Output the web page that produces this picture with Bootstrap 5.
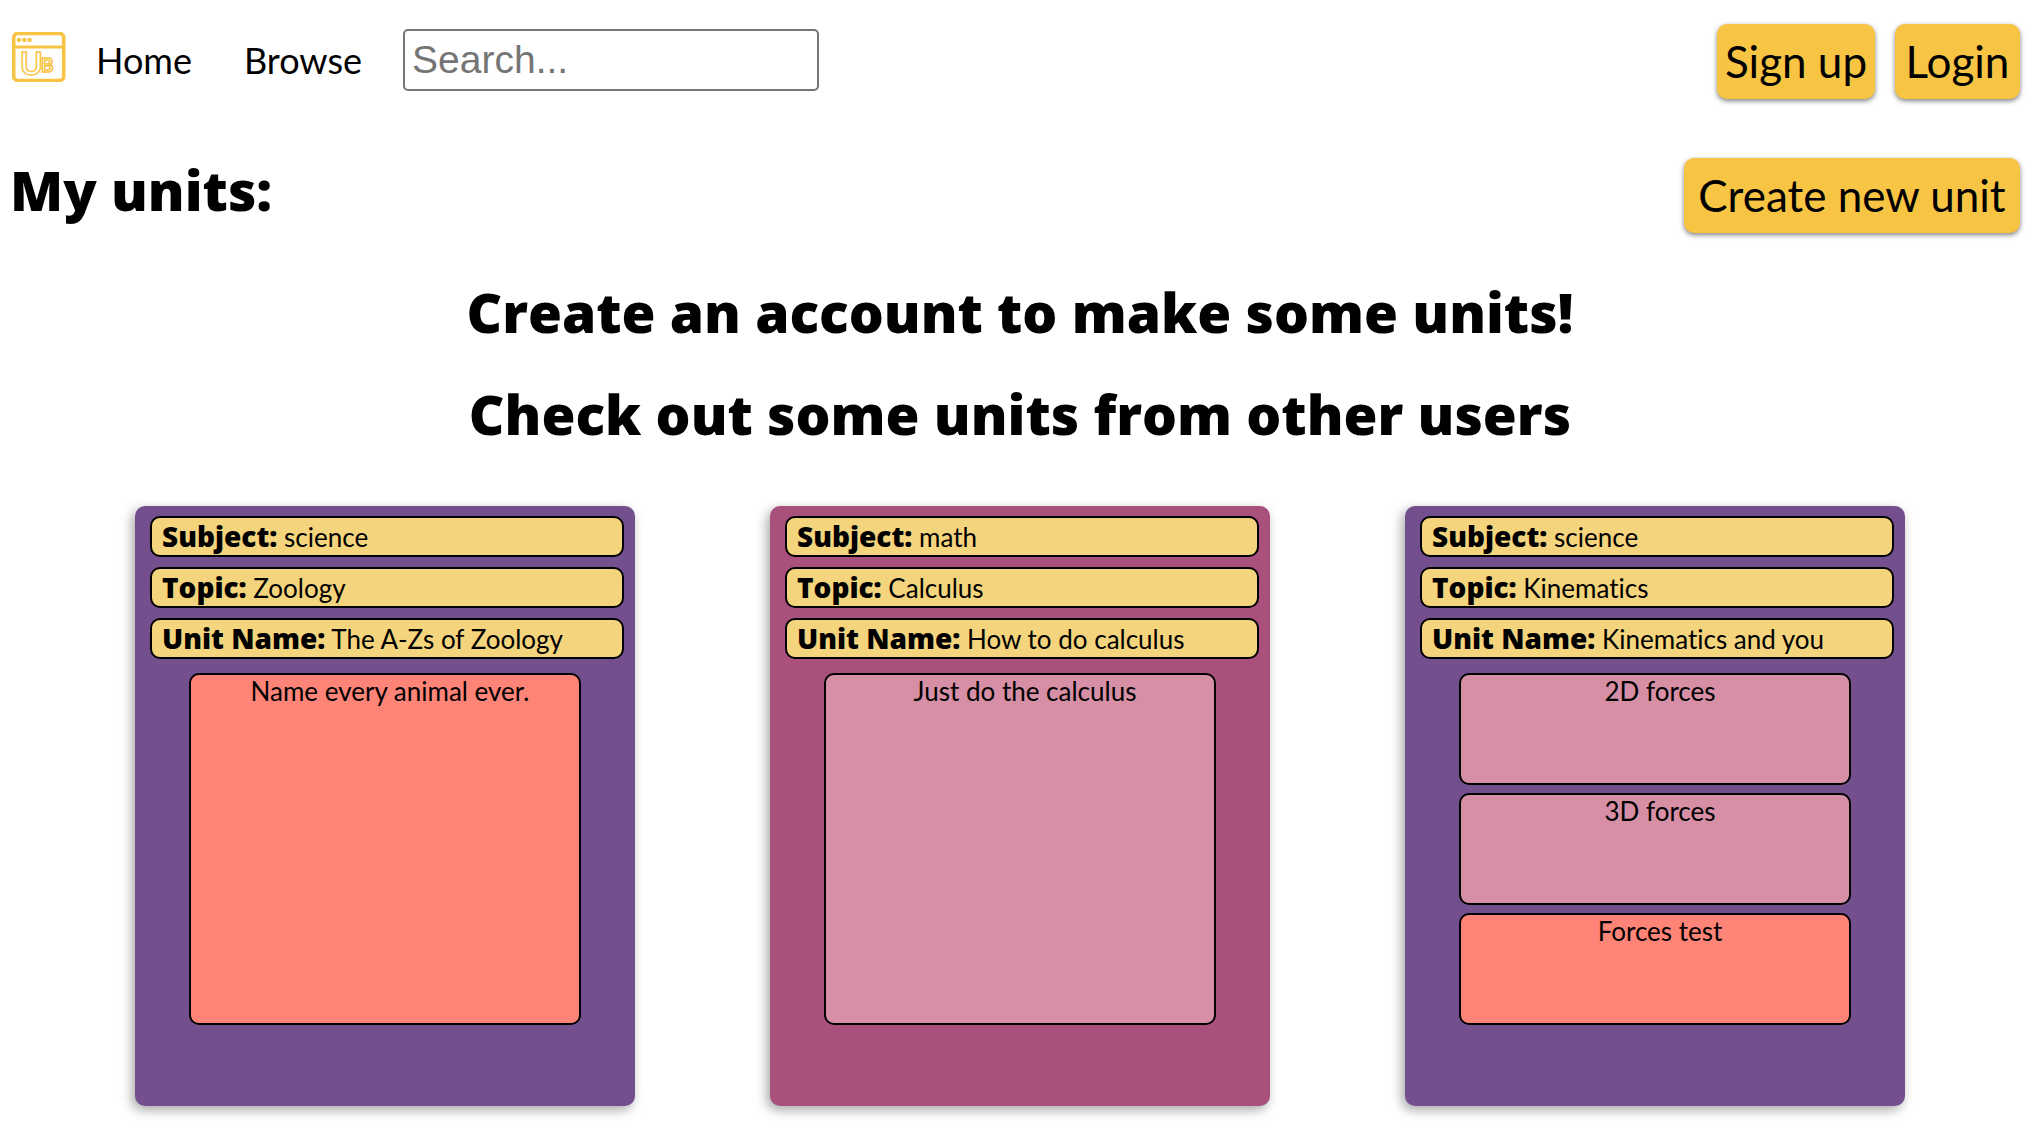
<!DOCTYPE html>
<html lang="en">
<head>
<meta charset="utf-8">
<meta name="viewport" content="width=device-width, initial-scale=1">
<title>Unit Builder</title>
<link href="https://cdn.jsdelivr.net/npm/bootstrap@5.3.0/dist/css/bootstrap.min.css" rel="stylesheet">
<style>
  body { font-family: Lato, "Open Sans", sans-serif; font-variant-ligatures: none; color: #000; background: #fff; }
  .site-bar { padding: 24px 24px 0 12px; }
  .site-links { padding-top: 5px; }
  .brand-link { padding-bottom: 6px; margin-right: 4px; line-height: 0; }
  .site-links .nav-link { padding: 0 26px; font-size: 36px; line-height: 60px; color: #000; }
  .search-box { width: 416px; height: 62px; margin-left: 15px; padding: 0 7px; border: 2px solid #767676; border-radius: 5px; font: 39px "Liberation Sans", Arial, sans-serif; color: #000; }
  .search-box::placeholder { color: #757575; }
  .btn-gold { --bs-btn-bg: #f7c443; --bs-btn-color: #000; --bs-btn-hover-bg: #eab52f; --bs-btn-active-bg: #eab52f; height: 75px; padding: 0; border: 0; border-radius: 10px; font-size: 44px; line-height: 75px; white-space: nowrap; box-shadow: 0 2px 5px rgba(0,0,0,.5); }
  .btn-signup { width: 158px; }
  .btn-login { width: 125px; }
  .btn-create { width: 336px; }
  .auth-buttons { gap: 20px; }
  .section-title { font: 800 55px/64px "Open Sans", sans-serif; margin: 0; }
  .units-bar { padding: 59px 24px 0 10px; }
  .units-body { padding: 0 4px 40px 0; }
  .notices { padding: 47px 0 60px; gap: 38px; }
  .unit-card { width: 500px; height: 600px; padding: 10px 11px 0 15px; border-radius: 10px; box-shadow: -3px 4px 12px rgba(0,0,0,.35); }
  .subject-science { background: #734f8e; }
  .subject-math { background: #a9507d; }
  .unit-field { height: 41px; margin-bottom: 10px; padding-left: 10px; border: 2px solid #000; border-radius: 10px; background: #f4d47c; font-size: 26px; line-height: 37px; white-space: nowrap; }
  .unit-field strong { font: 800 28px/36px "Open Sans", sans-serif; }
  .lesson-list { height: 352px; margin: 14px 43px 0 39px; gap: 8px; }
  .lesson { padding-left: 10px; border: 2px solid #000; border-radius: 10px; background: #d68fa5; font-size: 26px; line-height: 32px; }
  .lesson-test { background: #ff8478; }
</style>
</head>
<body>
<header class="site-bar d-flex flex-wrap justify-content-between align-items-start">
  <nav class="site-links d-flex align-items-center" aria-label="Main">
    <a href="#" class="brand-link" aria-label="Unit Builder">
      <svg width="54" height="50" viewBox="0 0 54 50" fill="none" stroke="#f7c443">
        <rect x="1.700" y="1.500" width="50" height="47" rx="4" stroke-width="3.600"/>
        <path d="M1 15H52" stroke-width="3"/>
        <g fill="#f7c443" stroke="none"><circle cx="7" cy="8" r="2.200"/><circle cx="12.300" cy="8" r="2.200"/><circle cx="17.600" cy="8" r="2.200"/></g>
        <g font-family="Inter, sans-serif" font-weight="600" stroke-width="1.500">
          <text x="8" y="43" font-size="31">U</text>
          <text x="29" y="39.500" font-size="19">B</text>
        </g>
      </svg>
    </a>
    <a href="#" class="nav-link">Home</a>
    <a href="#" class="nav-link">Browse</a>
    <input type="search" class="search-box" placeholder="Search..." aria-label="Search">
  </nav>
  <div class="auth-buttons d-flex">
    <button type="button" class="btn btn-gold btn-signup">Sign up</button>
    <button type="button" class="btn btn-gold btn-login">Login</button>
  </div>
</header>

<section class="units-bar d-flex justify-content-between align-items-start">
  <h1 class="section-title">My units:</h1>
  <button type="button" class="btn btn-gold btn-create">Create new unit</button>
</section>

<main class="units-body">
  <div class="notices d-flex flex-column text-center">
    <h2 class="section-title">Create an account to make some units!</h2>
    <h2 class="section-title">Check out some units from other users</h2>
  </div>

  <div class="d-flex flex-wrap justify-content-evenly">
    <article class="unit-card subject-science">
      <div class="unit-field"><strong>Subject:</strong> science</div>
      <div class="unit-field"><strong>Topic:</strong> Zoology</div>
      <div class="unit-field"><strong>Unit Name:</strong> The A-Zs of Zoology</div>
      <div class="lesson-list d-flex flex-column text-center">
        <div class="lesson lesson-test flex-fill">Name every animal ever.</div>
      </div>
    </article>
    <article class="unit-card subject-math">
      <div class="unit-field"><strong>Subject:</strong> math</div>
      <div class="unit-field"><strong>Topic:</strong> Calculus</div>
      <div class="unit-field"><strong>Unit Name:</strong> How to do calculus</div>
      <div class="lesson-list d-flex flex-column text-center">
        <div class="lesson flex-fill">Just do the calculus</div>
      </div>
    </article>
    <article class="unit-card subject-science">
      <div class="unit-field"><strong>Subject:</strong> science</div>
      <div class="unit-field"><strong>Topic:</strong> Kinematics</div>
      <div class="unit-field"><strong>Unit Name:</strong> Kinematics and you</div>
      <div class="lesson-list d-flex flex-column text-center">
        <div class="lesson flex-fill">2D forces</div>
        <div class="lesson flex-fill">3D forces</div>
        <div class="lesson lesson-test flex-fill">Forces test</div>
      </div>
    </article>
  </div>
</main>
<script src="https://cdn.jsdelivr.net/npm/bootstrap@5.3.0/dist/js/bootstrap.bundle.min.js"></script>
</body>
</html>
